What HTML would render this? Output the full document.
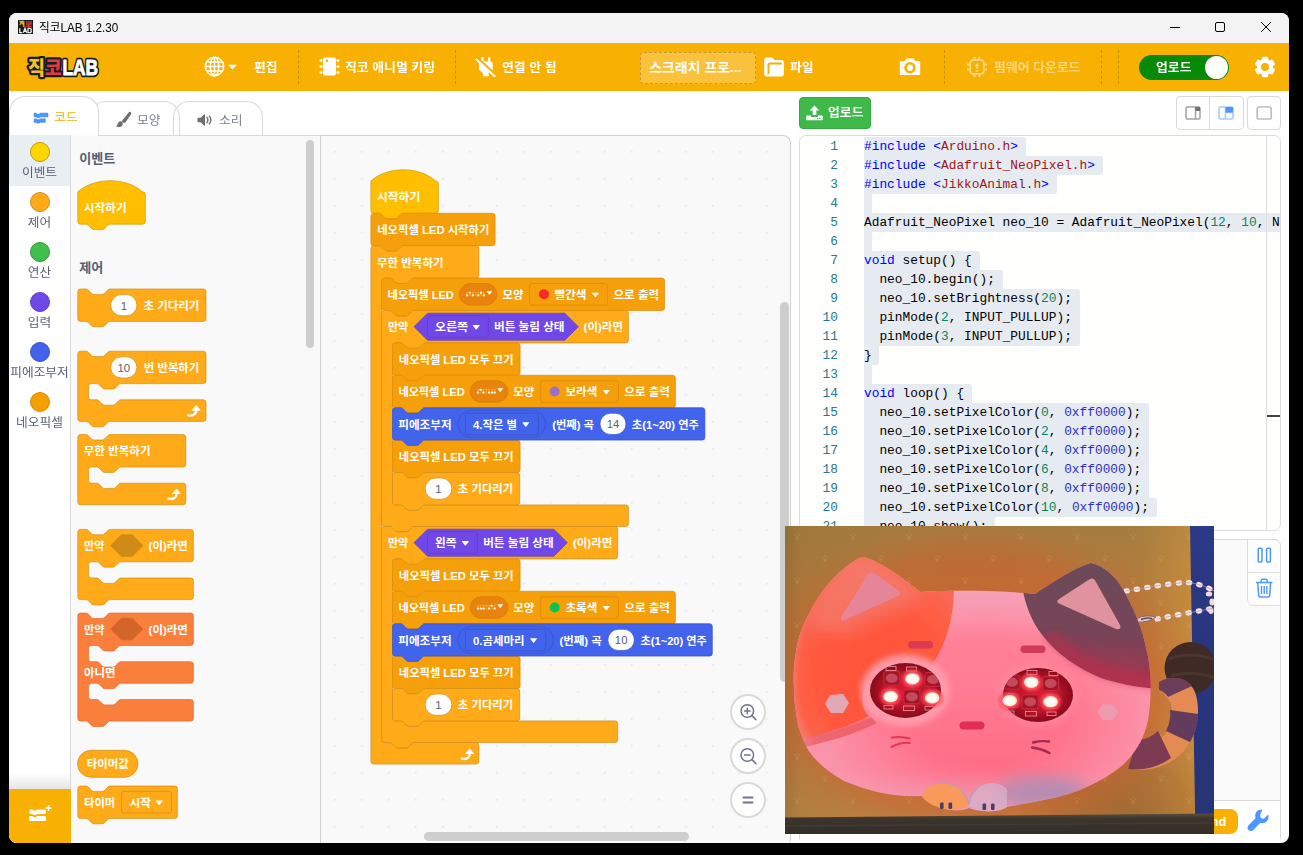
<!DOCTYPE html>
<html lang="ko">
<head>
<meta charset="utf-8">
<title>직코LAB 1.2.30</title>
<style>
*{box-sizing:border-box;margin:0;padding:0}
html,body{width:1303px;height:855px;overflow:hidden;background:#000}
body{font-family:"Liberation Sans","Noto Sans CJK KR",sans-serif;position:relative;color:#575e75}
.abs{position:absolute}
#win{position:absolute;left:9px;top:13px;width:1280px;height:830px;background:#fff;border-radius:8px;overflow:hidden}
/* all children of #win are positioned in SCREEN coords via this shifted layer */
#L{position:absolute;left:-9px;top:-13px;width:1303px;height:855px}
#titlebar{left:9px;top:13px;width:1280px;height:30px;background:#f3f3f3}
#title{left:38.500px;top:20px;font-size:12px;line-height:16px;color:#000;white-space:nowrap;transform:scaleX(.972);transform-origin:0 50%}
#menubar{left:9px;top:43px;width:1280px;height:48px;background:#f8b003}
.mtxt{position:absolute;top:59px;height:18px;line-height:18px;font-size:12px;font-weight:bold;color:#fff;white-space:nowrap;transform:scaleX(1.072);transform-origin:0 50%}
.dash{position:absolute;top:50px;height:34px;width:0;border-left:1px dashed rgba(0,0,0,.18)}
#proj{left:640px;top:52px;width:116px;height:32px;border:1px dashed rgba(0,0,0,.2);border-radius:4px;background:#fac23c}
#toggle{left:1139px;top:55px;width:90px;height:25px;border-radius:13px;background:#078a07}
#knob{left:1205px;top:56px;width:23px;height:23px;border-radius:50%;background:#fff}
.tab{position:absolute;border:1px solid #d9d9d9;border-bottom:none;border-radius:16px 16px 0 0;background:#fbfcfd}
.ttxt{position:absolute;font-size:12px;line-height:16px;white-space:nowrap;color:#7a8094;transform:scaleX(1.07);transform-origin:0 50%}
#catcol{left:9px;top:135px;width:62px;height:708px;background:#fff;border-top:1px solid #d9d9d9;border-right:1px solid #d9d9d9}
.cat{position:absolute;left:30px;width:20px;height:20px;border-radius:50%;border:1px solid}
.clab{position:absolute;left:9px;width:61px;text-align:center;font-size:12px;line-height:14px;color:#575e75;white-space:nowrap;transform:scaleX(1.06)}
#flyout{left:71px;top:135px;width:250px;height:708px;background:#f9f9f9;border-top:1px solid #d9d9d9;border-right:1px solid #d0d0d0}
#ws{left:321px;top:135px;width:470px;height:712px;background:#f9f9f9;border:1px solid #d0d0d0;border-left:none;border-radius:0 8px 8px 0;
 background-image:radial-gradient(circle,#dedede 0.6px,rgba(222,222,222,0) 1.15px);background-size:27px 27px;background-position:0.3px 2.3px}
.sb{position:absolute;background:#cecece;border-radius:5px}
.zb{position:absolute;left:730px;width:36px;height:36px;border-radius:50%;background:#fff;border:2px solid #d9d9d9}
#upbtn{left:799px;top:97px;width:72px;height:32px;border-radius:4px;background:#3fb94a;border:1px solid #38a843}
.lbtn{position:absolute;top:96px;height:34px;border:1px solid #d9d9d9;background:#fff}
#editor{left:799px;top:135px;width:482px;height:396px;border:1px solid #dcdcdc;border-radius:7px;background:#fffffe;overflow:hidden}
#edin{position:absolute;left:-800px;top:-136px;width:1303px;height:855px}
.ln{position:absolute;left:800px;width:38px;text-align:right;height:19px;line-height:19px;font-family:"Liberation Mono","DejaVu Sans Mono",monospace;font-size:12.83px;color:#237893;white-space:pre}
.cl{position:absolute;left:864px;height:19px;line-height:19px;font-family:"Liberation Mono","DejaVu Sans Mono",monospace;font-size:12.83px;color:#000;white-space:pre}
.sel{position:absolute;left:864px;height:19px;background:#e5ebf1}
.k{color:#0000ff}.s{color:#a31515}.n{color:#098658}.h{color:#3030c0}
#term{left:799px;top:539px;width:482px;height:305px;border:1px solid #dcdcdc;border-radius:7px;background:#fafafa;overflow:hidden}
#termbot{left:800px;top:800px;width:480px;height:43px;background:#fff;border-top:1px solid #d9d9d9}
#tools{left:1247px;top:539px;width:34px;height:67px;background:#fff;border:1px solid #dcdcdc;border-radius:0 7px 0 7px}
#send{left:1186px;top:809px;width:52px;padding-right:3px;height:25px;border-radius:8px;background:#f8b003;color:#fff;font-weight:bold;font-size:13px;line-height:25px;text-align:center}
#ext{left:9px;top:789px;width:62px;height:54px;background:#f8b003}
#extfade{left:9px;top:773px;width:61px;height:16px;background:linear-gradient(rgba(255,255,255,0),rgba(0,0,0,.10))}
svg{position:absolute;overflow:visible}
svg text{font-family:"Liberation Sans","Noto Sans CJK KR",sans-serif}
</style>
</head>
<body>
<div id="win"><div id="L">
<!-- ===== title bar ===== -->
<div class="abs" id="titlebar"></div>
<svg style="left:17.500px;top:20px" width="15" height="14" viewBox="0 0 15 14">
 <rect width="15" height="14" fill="#1a1a1a"/>
 <path d="M1.500 1.500h4.500M3.700 1.500L1.800 5M3.700 2.500l2 2.300M5.800 1v6" stroke="#e8b424" stroke-width="1.300" fill="none"/>
 <path d="M8 1.800h5v2.200h-5M8 4h5M10.500 4v2M7.500 6.300h6.200" stroke="#dc3a30" stroke-width="1.300" fill="none"/>
 <path d="M1.800 8.200v4.300h2.400M5.300 12.800l1.700-4.600 1.700 4.600M6 11.300h2M10 8.300v4.300h2.300c1.500 0 1.500-2.100 0-2.100c1.300 0 1.300-2.200 0-2.200z" stroke="#f2f2f2" stroke-width="1.250" fill="none"/>
</svg>
<div class="abs" id="title">직코LAB 1.2.30</div>
<svg style="left:1165px;top:17px" width="115" height="22" viewBox="1165 17 115 22" fill="none" stroke="#000" stroke-width="1">
 <path d="M1170 27.5h10"/>
 <rect x="1215.5" y="22.5" width="9" height="9" rx="1.5"/>
 <path d="M1261.2 22.2l9.6 9.6M1270.8 22.2l-9.6 9.6"/>
</svg>

<!-- ===== menu bar ===== -->
<div class="abs" id="menubar"></div>
<svg style="left:24px;top:52px" width="80" height="30" viewBox="24 52 80 30">
 <g font-family="'Liberation Sans','Noto Sans CJK KR',sans-serif" font-weight="900" font-size="19" stroke-linejoin="round">
  <g stroke="#171b2b" stroke-width="4.500" fill="#171b2b">
   <text x="28" y="74.500" textLength="17" lengthAdjust="spacingAndGlyphs">직</text>
   <text x="45" y="74.500" textLength="16.500" lengthAdjust="spacingAndGlyphs">코</text>
   <text x="62.500" y="75" textLength="35.500" lengthAdjust="spacingAndGlyphs" font-size="21.500" font-weight="bold">LAB</text>
  </g>
  <text x="28" y="74.500" textLength="17" lengthAdjust="spacingAndGlyphs" fill="#f8c21c">직</text>
  <text x="45" y="74.500" textLength="16.500" lengthAdjust="spacingAndGlyphs" fill="#e23b3b">코</text>
  <text x="62.500" y="75" textLength="35.500" lengthAdjust="spacingAndGlyphs" fill="#fff" stroke="#fff" stroke-width=".9" font-size="21.500" font-weight="bold">LAB</text>
 </g>
</svg>
<!-- globe -->
<svg style="left:204px;top:56px" width="21" height="21" viewBox="0 0 21 21" fill="none" stroke="#fff" stroke-width="1.5">
 <circle cx="10.5" cy="10.5" r="9.2"/><ellipse cx="10.5" cy="10.5" rx="4.3" ry="9.2"/><path d="M10.5 1.3v18.4M1.3 10.5h18.4M2.6 6h15.8M2.6 15h15.8"/>
</svg>
<svg style="left:228px;top:64px" width="9" height="6" viewBox="0 0 9 6"><path d="M0.8 0.8h7.4q.6 0 .2 .5l-3.4 3.7q-.5 .5-1 0l-3.4-3.7q-.4-.5 .2-.5z" fill="#fff"/></svg>
<div class="mtxt" style="left:254px">편집</div>
<div class="dash" style="left:298px"></div>
<!-- chip icon -->
<svg style="left:319px;top:57px" width="21" height="19" viewBox="0 0 21 19" fill="#fff">
 <rect x="4" y="0.5" width="13" height="18" rx="2"/>
 <rect x="0.5" y="2.2" width="3" height="2.6" rx="1"/><rect x="0.5" y="8.2" width="3" height="2.6" rx="1"/><rect x="0.5" y="14.2" width="3" height="2.6" rx="1"/>
 <rect x="17.5" y="2.2" width="3" height="2.6" rx="1"/><rect x="17.5" y="8.2" width="3" height="2.6" rx="1"/><rect x="17.5" y="14.2" width="3" height="2.6" rx="1"/>
 <circle cx="8" cy="3.8" r="1.2" fill="#f8b003"/>
</svg>
<div class="mtxt" style="left:345px">직코 애니멀 키링</div>
<div class="dash" style="left:455px"></div>
<!-- unplug icon -->
<svg style="left:472.400px;top:53.600px" width="28" height="26" viewBox="0 0 28 26"><g transform="scale(1.150 1.063)" fill="#fff">
 <path d="M18 14.490V9c0-1-1.010-2.010-2-2V3h-2v4h-4V3H8v2.480l9.510 9.500.49-.490zm-1.760 1.770L7.200 7.200l-.010.010L3.980 4 2.710 5.250l3.360 3.360C6.040 8.740 6 8.870 6 9v5.480L9.500 18v3h5v-3l.480-.480L19.450 22l1.260-1.280-4.470-4.460z"/>
</g></svg>
<div class="mtxt" style="left:502px">연결 안 됨</div>
<div class="abs" id="proj"></div>
<div class="mtxt" style="left:649px;font-size:13px">스크래치 프로...</div>
<!-- folder -->
<svg style="left:764px;top:57px" width="21" height="21" viewBox="0 0 21 21">
 <path d="M0.200 3.200c0-1.700.9-2.700 2.600-2.700h4.400c.9 0 1.500.3 2 1l1 1.400h7c1.700 0 2.700 1 2.700 2.700v11.200c0 1.700-1 2.700-2.700 2.700H2.800c-1.700 0-2.600-1-2.600-2.700z" fill="#fff"/>
 <path d="M4.500 16.800V8c0-1 .5-1.500 1.500-1.500h11.800" fill="none" stroke="#f8b003" stroke-width="2"/>
</svg>
<div class="mtxt" style="left:790px">파일</div>
<!-- camera -->
<svg style="left:899px;top:58px" width="22" height="18" viewBox="0 0 22 18" fill="#fff">
 <path d="M7.200 0.500h7.600l1.400 2.600h3.700c.8 0 1.300.5 1.300 1.300v11.300c0 .8-.5 1.300-1.300 1.300H2.100c-.8 0-1.300-.5-1.300-1.300V4.400c0-.8.5-1.300 1.300-1.300h3.700z"/>
 <circle cx="11" cy="9.700" r="5.700" fill="#f8b003"/><circle cx="11" cy="9.700" r="3.100"/>
</svg>
<div class="dash" style="left:944px"></div>
<!-- firmware icon (faded) -->
<svg style="left:966px;top:56px;opacity:.5" width="22" height="22" viewBox="0 0 22 22" fill="none" stroke="#fff" stroke-width="1.700">
 <rect x="4.200" y="4.200" width="13.600" height="13.600" rx="2.800"/>
 <path d="M8.600 1v3.200M13.400 1v3.200M8.600 17.800V21M13.400 17.800V21M1 8.600h3.200M1 13.400h3.200M17.800 8.600H21M17.800 13.400H21" stroke-width="2"/>
 <path d="M11 13V8.800M9.300 10.200L11 8.200l1.700 2M9.800 15h2.400" stroke-width="1.400"/>
</svg>
<div class="mtxt" style="left:994px;opacity:.5">펌웨어 다운로드</div>
<div class="dash" style="left:1101px"></div>
<div class="dash" style="left:1118px"></div>
<div class="abs" id="toggle"></div><div class="abs" id="knob"></div>
<div class="mtxt" style="left:1156px">업로드</div>
<!-- gear -->
<svg style="left:1254px;top:56px" width="22" height="22" viewBox="-11 -11 22 22">
 <g fill="#fff">
  <circle r="8.100"/>
  <g id="gt"><rect x="-3.200" y="-10.300" width="6.400" height="5" rx="1.400"/></g>
  <use href="#gt" transform="rotate(60)"/><use href="#gt" transform="rotate(120)"/><use href="#gt" transform="rotate(180)"/><use href="#gt" transform="rotate(240)"/><use href="#gt" transform="rotate(300)"/>
 </g>
 <circle r="3.900" fill="#f8b003"/>
</svg>

<!-- ===== tabs ===== -->
<div class="tab" style="left:173px;top:101px;width:90px;height:34px;background:transparent"></div>
<div class="tab" style="left:90px;top:101px;width:90px;height:34px;background:transparent"></div>
<div class="tab" style="left:9px;top:96px;width:90px;height:40px;background:#fff"></div>
<svg style="left:33px;top:112px" width="16" height="12" viewBox="0 0 18 14" fill="#4c97ff">
 <path d="M1.500 1h2l1 1h2.500l1-1h8.500a1 1 0 0 1 1 1v3a1 1 0 0 1-1 1h-8.500l-1 1h-2.500l-1-1h-2a1 1 0 0 1-1-1v-3a1 1 0 0 1 1-1z"/>
 <path d="M1.500 7.500h2l1 1h2.500l1-1h5.500a1 1 0 0 1 1 1v3a1 1 0 0 1-1 1h-5.500l-1 1h-2.500l-1-1h-2a1 1 0 0 1-1-1v-3a1 1 0 0 1 1-1z"/>
</svg>
<div class="ttxt" style="left:54px;top:109.500px;color:#f8b003">코드</div>
<svg style="left:114.500px;top:110.500px" width="17" height="17" viewBox="0 0 18 18" fill="#6f6f6f">
 <path d="M16.600 1c1 .7.700 1.800.2 2.600l-5.600 8.200c-.7 1-1.900 1.100-2.800.5s-1.200-1.700-.4-2.700l6.300-7.800c.6-.8 1.500-1.300 2.300-.8z"/>
 <path d="M7 11.200c1.400 1 1.700 2.800.7 4.200-1.400 2-4.700 2.100-7 .8 1.600-.6 2-1.600 2.300-2.900.4-1.800 2.400-3.200 4-2.100z"/>
</svg>
<div class="ttxt" style="left:137px;top:112.500px">모양</div>
<svg style="left:197px;top:112.500px" width="16" height="14" viewBox="0 0 18 16" fill="#6f6f6f">
 <path d="M1 5.300h3l4.200-3.800c.4-.3.800-.1.800.4v12.200c0 .5-.4.700-.8.400L4 10.700H1c-.3 0-.5-.2-.5-.5V5.800c0-.3.200-.5.500-.5z"/>
 <path d="M11.300 5c1.200 1.700 1.200 4.300 0 6" fill="none" stroke="#6f6f6f" stroke-width="1.600" stroke-linecap="round"/>
 <path d="M14 3.600c2 2.600 2 6.200 0 8.800" fill="none" stroke="#6f6f6f" stroke-width="1.600" stroke-linecap="round"/>
</svg>
<div class="ttxt" style="left:219px;top:112.500px">소리</div>

<!-- ===== category column ===== -->
<div class="abs" id="catcol"></div>
<div class="abs" style="left:9px;top:135px;width:61px;height:51px;background:#e9eef2"></div>
<div class="cat" style="top:142px;background:#ffd500;border-color:#cc9900"></div><div class="clab" style="top:165.500px">이벤트</div>
<div class="cat" style="top:192px;background:#ffab19;border-color:#cf8b17"></div><div class="clab" style="top:215.500px">제어</div>
<div class="cat" style="top:242px;background:#40bf4a;border-color:#389438"></div><div class="clab" style="top:265.500px">연산</div>
<div class="cat" style="top:292px;background:#7048e8;border-color:#5f3dc4"></div><div class="clab" style="top:315.500px">입력</div>
<div class="cat" style="top:342px;background:#4263eb;border-color:#364fc7"></div><div class="clab" style="top:365.500px">피에조부저</div>
<div class="cat" style="top:392px;background:#f59f00;border-color:#e08700"></div><div class="clab" style="top:415.500px">네오픽셀</div>
<div class="abs" id="extfade"></div>
<div class="abs" id="ext"></div>
<svg style="left:29px;top:805px" width="23" height="18" viewBox="0 0 23 18" fill="#fff">
 <path d="M1.500 4.500h2l1 1h2.500l1-1h8a1 1 0 0 1 1 1v2.500a1 1 0 0 1-1 1h-8l-1 1h-2.500l-1-1h-2a1 1 0 0 1-1-1v-2.500a1 1 0 0 1 1-1z"/>
 <path d="M1.500 11h2l1 1h2.500l1-1h8a1 1 0 0 1 1 1v3a1 1 0 0 1-1 1h-15a1 1 0 0 1-1-1v-3a1 1 0 0 1 1-1z"/>
 <path d="M19.500 0v6M16.500 3h6" stroke="#fff" stroke-width="1.600" fill="none"/>
</svg>
<!-- ===== flyout + workspace ===== -->
<div class="abs" id="flyout"></div>
<div class="abs" style="left:71px;top:135px;width:27px;height:1px;background:#fcfcfc"></div>
<div class="sb" style="left:306px;top:140px;width:8px;height:208px"></div>
<div class="abs" id="ws"></div>
<div class="sb" style="left:780px;top:302px;width:9px;height:380px"></div>
<div class="sb" style="left:424px;top:832px;width:265px;height:9px"></div>
<div class="zb" style="top:694px"></div><div class="zb" style="top:738px"></div><div class="zb" style="top:782px"></div>
<svg style="left:730px;top:694px" width="36" height="124" viewBox="730 694 36 124" fill="none" stroke="#6e7390" stroke-width="1.500" stroke-linecap="round">
 <circle cx="747.300" cy="711" r="6.300"/><path d="M751.900 715.600l4 4M744.500 711h5.600M747.300 708.200v5.600"/>
 <circle cx="747.300" cy="755" r="6.300"/><path d="M751.900 759.600l4 4M744.500 755h5.600"/>
 <path d="M743.500 797.500h9M743.500 802.500h9" stroke-width="1.800"/>
</svg>
<svg style="left:0;top:0" width="321" height="843" viewBox="0 0 321 843">
<text x="79.3" y="163.48" textLength="36.1" lengthAdjust="spacingAndGlyphs" font-size="13" font-weight="bold" fill="#575e75">이벤트</text>
<text x="79.3" y="272.48" textLength="24" lengthAdjust="spacingAndGlyphs" font-size="13" font-weight="bold" fill="#575e75">제어</text>
<path transform="translate(77.8,191.8) scale(0.675)" d="m 0,0 c 25,-22 71,-22 96,0 H 96 a 4,4 0 0,1 4,4 v 40 a 4,4 0 0,1 -4,4 H 48 c -2,0 -3,1 -4,2 l -4,4 c -1,1 -2,2 -4,2 h -12 c -2,0 -3,-1 -4,-2 l -4,-4 c -1,-1 -2,-2 -4,-2 H 4 a 4,4 0 0,1 -4,-4 z" fill="#ffbf00" stroke="#cc9900" stroke-width="1"/>
<text x="83.8" y="211.69" textLength="42.8" lengthAdjust="spacingAndGlyphs" font-size="10.8" font-weight="bold" fill="#fff">시작하기</text>
<path transform="translate(77.8,289) scale(0.675)" d="m 0,4 A 4,4 0 0,1 4,0 H 12 c 2,0 3,1 4,2 l 4,4 c 1,1 2,2 4,2 h 12 c 2,0 3,-1 4,-2 l 4,-4 c 1,-1 2,-2 4,-2 H 185.93 a 4,4 0 0,1 4,4 v 40 a 4,4 0 0,1 -4,4 H 48 c -2,0 -3,1 -4,2 l -4,4 c -1,1 -2,2 -4,2 h -12 c -2,0 -3,-1 -4,-2 l -4,-4 c -1,-1 -2,-2 -4,-2 H 4 a 4,4 0 0,1 -4,-4 z" fill="#ffab19" stroke="#cf8b17" stroke-width="1"/>
<rect x="110.7" y="294.6" width="26.2" height="21.2" rx="10.6" fill="#fff" stroke="#cf8b17" stroke-width="0.7"/>
<text x="123.8" y="309.77" text-anchor="middle" font-size="11.3" font-weight="normal" fill="#575e75">1</text>
<text x="143.5" y="309.89" textLength="55.8" lengthAdjust="spacingAndGlyphs" font-size="10.8" font-weight="bold" fill="#fff">초 기다리기</text>
<path transform="translate(77.8,351.2) scale(0.675)" d="m 0,4 A 4,4 0 0,1 4,0 H 12 c 2,0 3,1 4,2 l 4,4 c 1,1 2,2 4,2 h 12 c 2,0 3,-1 4,-2 l 4,-4 c 1,-1 2,-2 4,-2 H 185.93 a 4,4 0 0,1 4,4 v 40 a 4,4 0 0,1 -4,4 H 64 c -2,0 -3,1 -4,2 l -4,4 c -1,1 -2,2 -4,2 h -12 c -2,0 -3,-1 -4,-2 l -4,-4 c -1,-1 -2,-2 -4,-2 h -8 a 4,4 0 0,0 -4,4 v 16 a 4,4 0 0,0 4,4 h 8 c 2,0 3,1 4,2 l 4,4 c 1,1 2,2 4,2 h 12 c 2,0 3,-1 4,-2 l 4,-4 c 1,-1 2,-2 4,-2 H 185.93 a 4,4 0 0,1 4,4 v 24 a 4,4 0 0,1 -4,4 H 48 c -2,0 -3,1 -4,2 l -4,4 c -1,1 -2,2 -4,2 h -12 c -2,0 -3,-1 -4,-2 l -4,-4 c -1,-1 -2,-2 -4,-2 H 4 a 4,4 0 0,1 -4,-4 z" fill="#ffab19" stroke="#cf8b17" stroke-width="1"/>
<rect x="110.7" y="356.8" width="26.2" height="21.2" rx="10.6" fill="#fff" stroke="#cf8b17" stroke-width="0.7"/>
<text x="123.8" y="371.97" text-anchor="middle" font-size="11.3" font-weight="normal" fill="#575e75">10</text>
<text x="143.8" y="372.09" textLength="55.5" lengthAdjust="spacingAndGlyphs" font-size="10.8" font-weight="bold" fill="#fff">번 반복하기</text>
<g transform="translate(186.7,404.5) scale(1.05)" fill="none" stroke="#fff" stroke-width="2.2" stroke-linecap="round" stroke-linejoin="round"><path d="M1.500 10.300c4.200 1 7.700-1 7.600-5.300"/><path d="M5.400 5.400L9.100 1.400l3.500 4z" fill="#fff" stroke-width="1"/></g>
<path transform="translate(77.8,434.6) scale(0.675)" d="m 0,4 A 4,4 0 0,1 4,0 H 12 c 2,0 3,1 4,2 l 4,4 c 1,1 2,2 4,2 h 12 c 2,0 3,-1 4,-2 l 4,-4 c 1,-1 2,-2 4,-2 H 156 a 4,4 0 0,1 4,4 v 40 a 4,4 0 0,1 -4,4 H 64 c -2,0 -3,1 -4,2 l -4,4 c -1,1 -2,2 -4,2 h -12 c -2,0 -3,-1 -4,-2 l -4,-4 c -1,-1 -2,-2 -4,-2 h -8 a 4,4 0 0,0 -4,4 v 16 a 4,4 0 0,0 4,4 h 8 c 2,0 3,1 4,2 l 4,4 c 1,1 2,2 4,2 h 12 c 2,0 3,-1 4,-2 l 4,-4 c 1,-1 2,-2 4,-2 H 156 a 4,4 0 0,1 4,4 v 24 a 4,4 0 0,1 -4,4 H 4 a 4,4 0 0,1 -4,-4 z" fill="#ffab19" stroke="#cf8b17" stroke-width="1"/>
<text x="83.7" y="455.49" textLength="66.9" lengthAdjust="spacingAndGlyphs" font-size="10.8" font-weight="bold" fill="#fff">무한 반복하기</text>
<g transform="translate(167,487.9) scale(1.05)" fill="none" stroke="#fff" stroke-width="2.2" stroke-linecap="round" stroke-linejoin="round"><path d="M1.500 10.300c4.200 1 7.700-1 7.600-5.300"/><path d="M5.400 5.400L9.100 1.400l3.500 4z" fill="#fff" stroke-width="1"/></g>
<path transform="translate(77.8,529.4) scale(0.675)" d="m 0,4 A 4,4 0 0,1 4,0 H 12 c 2,0 3,1 4,2 l 4,4 c 1,1 2,2 4,2 h 12 c 2,0 3,-1 4,-2 l 4,-4 c 1,-1 2,-2 4,-2 H 167.26 a 4,4 0 0,1 4,4 v 40 a 4,4 0 0,1 -4,4 H 64 c -2,0 -3,1 -4,2 l -4,4 c -1,1 -2,2 -4,2 h -12 c -2,0 -3,-1 -4,-2 l -4,-4 c -1,-1 -2,-2 -4,-2 h -8 a 4,4 0 0,0 -4,4 v 16 a 4,4 0 0,0 4,4 h 8 c 2,0 3,1 4,2 l 4,4 c 1,1 2,2 4,2 h 12 c 2,0 3,-1 4,-2 l 4,-4 c 1,-1 2,-2 4,-2 H 167.26 a 4,4 0 0,1 4,4 v 24 a 4,4 0 0,1 -4,4 H 48 c -2,0 -3,1 -4,2 l -4,4 c -1,1 -2,2 -4,2 h -12 c -2,0 -3,-1 -4,-2 l -4,-4 c -1,-1 -2,-2 -4,-2 H 4 a 4,4 0 0,1 -4,-4 z" fill="#ffab19" stroke="#cf8b17" stroke-width="1"/>
<text x="84" y="550.29" textLength="20.4" lengthAdjust="spacingAndGlyphs" font-size="10.8" font-weight="bold" fill="#fff">만약</text>
<path d="M121.4 534.8 H132.2 L143 545.6 L132.2 556.4 H121.4 L110.6 545.6 Z" fill="#cf8b17" stroke="#cf8b17" stroke-width="0.7"/>
<text x="148.6" y="550.29" textLength="39.1" lengthAdjust="spacingAndGlyphs" font-size="10.8" font-weight="bold" fill="#fff">(이)라면</text>
<path transform="translate(77.8,613.1) scale(0.675)" d="m 0,4 A 4,4 0 0,1 4,0 H 12 c 2,0 3,1 4,2 l 4,4 c 1,1 2,2 4,2 h 12 c 2,0 3,-1 4,-2 l 4,-4 c 1,-1 2,-2 4,-2 H 167.26 a 4,4 0 0,1 4,4 v 40 a 4,4 0 0,1 -4,4 H 64 c -2,0 -3,1 -4,2 l -4,4 c -1,1 -2,2 -4,2 h -12 c -2,0 -3,-1 -4,-2 l -4,-4 c -1,-1 -2,-2 -4,-2 h -8 a 4,4 0 0,0 -4,4 v 16 a 4,4 0 0,0 4,4 h 8 c 2,0 3,1 4,2 l 4,4 c 1,1 2,2 4,2 h 12 c 2,0 3,-1 4,-2 l 4,-4 c 1,-1 2,-2 4,-2 H 167.26 a 4,4 0 0,1 4,4 v 24 a 4,4 0 0,1 -4,4 H 64 c -2,0 -3,1 -4,2 l -4,4 c -1,1 -2,2 -4,2 h -12 c -2,0 -3,-1 -4,-2 l -4,-4 c -1,-1 -2,-2 -4,-2 h -8 a 4,4 0 0,0 -4,4 v 16 a 4,4 0 0,0 4,4 h 8 c 2,0 3,1 4,2 l 4,4 c 1,1 2,2 4,2 h 12 c 2,0 3,-1 4,-2 l 4,-4 c 1,-1 2,-2 4,-2 H 167.26 a 4,4 0 0,1 4,4 v 24 a 4,4 0 0,1 -4,4 H 48 c -2,0 -3,1 -4,2 l -4,4 c -1,1 -2,2 -4,2 h -12 c -2,0 -3,-1 -4,-2 l -4,-4 c -1,-1 -2,-2 -4,-2 H 4 a 4,4 0 0,1 -4,-4 z" fill="#fb7f3c" stroke="#e06a2a" stroke-width="1"/>
<text x="84" y="633.69" textLength="20.4" lengthAdjust="spacingAndGlyphs" font-size="10.8" font-weight="bold" fill="#fff">만약</text>
<path d="M121.4 618.2 H132.2 L143 629 L132.2 639.8 H121.4 L110.6 629 Z" fill="#d4652a" stroke="#d4652a" stroke-width="0.7"/>
<text x="148.6" y="633.69" textLength="39.1" lengthAdjust="spacingAndGlyphs" font-size="10.8" font-weight="bold" fill="#fff">(이)라면</text>
<text x="84" y="676.89" textLength="31.6" lengthAdjust="spacingAndGlyphs" font-size="10.8" font-weight="bold" fill="#fff">아니면</text>
<rect x="77.5" y="750.3" width="60.5" height="27" rx="13.5" fill="#ffab19" stroke="#cf8b17" stroke-width="0.7"/>
<text x="86.8" y="768.49" textLength="41.8" lengthAdjust="spacingAndGlyphs" font-size="10.8" font-weight="bold" fill="#fff">타이머값</text>
<path transform="translate(77.8,786) scale(0.675)" d="m 0,4 A 4,4 0 0,1 4,0 H 12 c 2,0 3,1 4,2 l 4,4 c 1,1 2,2 4,2 h 12 c 2,0 3,-1 4,-2 l 4,-4 c 1,-1 2,-2 4,-2 H 143.56 a 4,4 0 0,1 4,4 v 40 a 4,4 0 0,1 -4,4 H 48 c -2,0 -3,1 -4,2 l -4,4 c -1,1 -2,2 -4,2 h -12 c -2,0 -3,-1 -4,-2 l -4,-4 c -1,-1 -2,-2 -4,-2 H 4 a 4,4 0 0,1 -4,-4 z" fill="#ffab19" stroke="#cf8b17" stroke-width="1"/>
<text x="84" y="806.89" textLength="31.3" lengthAdjust="spacingAndGlyphs" font-size="10.8" font-weight="bold" fill="#fff">타이머</text>
<rect x="121.5" y="791.4" width="50" height="21.6" rx="2.7" fill="#ffab19" stroke="#cf8b17" stroke-width="0.7"/>
<text x="129.5" y="806.89" textLength="21.4" lengthAdjust="spacingAndGlyphs" font-size="10.8" font-weight="bold" fill="#fff">시작</text>
<path d="M156.1 800.61 h6.2 q.7 0 .25 .55 l-2.85 3.58 q-.5 .5 -1 0 l-2.85 -3.58 q-.45 -.55 .25 -.55z" fill="#fff"/>
</svg>
<svg style="left:0;top:0" width="791" height="843" viewBox="0 0 791 843">
<path transform="translate(370.9,180.9) scale(0.675)" d="m 0,0 c 25,-22 71,-22 96,0 H 96 a 4,4 0 0,1 4,4 v 40 a 4,4 0 0,1 -4,4 H 48 c -2,0 -3,1 -4,2 l -4,4 c -1,1 -2,2 -4,2 h -12 c -2,0 -3,-1 -4,-2 l -4,-4 c -1,-1 -2,-2 -4,-2 H 4 a 4,4 0 0,1 -4,-4 z" fill="#ffbf00" stroke="#cc9900" stroke-width="1"/>
<text x="377" y="200.99" textLength="43.2" lengthAdjust="spacingAndGlyphs" font-size="10.8" font-weight="bold" fill="#fff">시작하기</text>
<path transform="translate(370.9,213.3) scale(0.675)" d="m 0,4 A 4,4 0 0,1 4,0 H 12 c 2,0 3,1 4,2 l 4,4 c 1,1 2,2 4,2 h 12 c 2,0 3,-1 4,-2 l 4,-4 c 1,-1 2,-2 4,-2 H 180 a 4,4 0 0,1 4,4 v 40 a 4,4 0 0,1 -4,4 H 48 c -2,0 -3,1 -4,2 l -4,4 c -1,1 -2,2 -4,2 h -12 c -2,0 -3,-1 -4,-2 l -4,-4 c -1,-1 -2,-2 -4,-2 H 4 a 4,4 0 0,1 -4,-4 z" fill="#f59f0a" stroke="#dc8a06" stroke-width="1"/>
<text x="377.2" y="234.19" textLength="112.1" lengthAdjust="spacingAndGlyphs" font-size="10.8" font-weight="bold" fill="#fff">네오픽셀 LED 시작하기</text>
<path transform="translate(370.9,245.7) scale(0.675)" d="m 0,4 A 4,4 0 0,1 4,0 H 12 c 2,0 3,1 4,2 l 4,4 c 1,1 2,2 4,2 h 12 c 2,0 3,-1 4,-2 l 4,-4 c 1,-1 2,-2 4,-2 H 156 a 4,4 0 0,1 4,4 v 40 a 4,4 0 0,1 -4,4 H 64 c -2,0 -3,1 -4,2 l -4,4 c -1,1 -2,2 -4,2 h -12 c -2,0 -3,-1 -4,-2 l -4,-4 c -1,-1 -2,-2 -4,-2 h -8 a 4,4 0 0,0 -4,4 v 680 a 4,4 0 0,0 4,4 h 8 c 2,0 3,1 4,2 l 4,4 c 1,1 2,2 4,2 h 12 c 2,0 3,-1 4,-2 l 4,-4 c 1,-1 2,-2 4,-2 H 156 a 4,4 0 0,1 4,4 v 24 a 4,4 0 0,1 -4,4 H 4 a 4,4 0 0,1 -4,-4 z" fill="#ffab19" stroke="#cf8b17" stroke-width="1"/>
<text x="377" y="266.59" textLength="66.5" lengthAdjust="spacingAndGlyphs" font-size="10.8" font-weight="bold" fill="#fff">무한 반복하기</text>
<g transform="translate(460.2,747.9) scale(1.05)" fill="none" stroke="#fff" stroke-width="2.2" stroke-linecap="round" stroke-linejoin="round"><path d="M1.500 10.300c4.200 1 7.700-1 7.600-5.300"/><path d="M5.400 5.400L9.100 1.400l3.500 4z" fill="#fff" stroke-width="1"/></g>
<path transform="translate(381.7,310.5) scale(0.675)" d="m 0,4 A 4,4 0 0,1 4,0 H 12 c 2,0 3,1 4,2 l 4,4 c 1,1 2,2 4,2 h 12 c 2,0 3,-1 4,-2 l 4,-4 c 1,-1 2,-2 4,-2 H 361.48 a 4,4 0 0,1 4,4 v 40 a 4,4 0 0,1 -4,4 H 64 c -2,0 -3,1 -4,2 l -4,4 c -1,1 -2,2 -4,2 h -12 c -2,0 -3,-1 -4,-2 l -4,-4 c -1,-1 -2,-2 -4,-2 h -8 a 4,4 0 0,0 -4,4 v 232 a 4,4 0 0,0 4,4 h 8 c 2,0 3,1 4,2 l 4,4 c 1,1 2,2 4,2 h 12 c 2,0 3,-1 4,-2 l 4,-4 c 1,-1 2,-2 4,-2 H 361.48 a 4,4 0 0,1 4,4 v 24 a 4,4 0 0,1 -4,4 H 48 c -2,0 -3,1 -4,2 l -4,4 c -1,1 -2,2 -4,2 h -12 c -2,0 -3,-1 -4,-2 l -4,-4 c -1,-1 -2,-2 -4,-2 H 4 a 4,4 0 0,1 -4,-4 z" fill="#ffab19" stroke="#cf8b17" stroke-width="1"/>
<text x="387.9" y="331.39" textLength="20.2" lengthAdjust="spacingAndGlyphs" font-size="10.8" font-weight="bold" fill="#fff">만약</text>
<path d="M427.5 313.2 H564.8 L578.3 326.7 L564.8 340.2 H427.5 L414 326.7 Z" fill="#7048e8" stroke="#5f3dc4" stroke-width="0.7"/>
<rect x="427.5" y="315.9" width="60.9" height="21.6" rx="2.7" fill="#7048e8" stroke="#5f3dc4" stroke-width="0.7"/>
<text x="435" y="331.39" textLength="33.2" lengthAdjust="spacingAndGlyphs" font-size="10.8" font-weight="bold" fill="#fff">오른쪽</text>
<path d="M473.1 325.11 h6.2 q.7 0 .25 .55 l-2.85 3.58 q-.5 .5 -1 0 l-2.85 -3.58 q-.45 -.55 .25 -.55z" fill="#fff"/>
<text x="494" y="331.39" textLength="70.5" lengthAdjust="spacingAndGlyphs" font-size="10.8" font-weight="bold" fill="#fff">버튼 눌림 상태</text>
<text x="583.6" y="331.39" textLength="39.4" lengthAdjust="spacingAndGlyphs" font-size="10.8" font-weight="bold" fill="#fff">(이)라면</text>
<path transform="translate(381.7,526.5) scale(0.675)" d="m 0,4 A 4,4 0 0,1 4,0 H 12 c 2,0 3,1 4,2 l 4,4 c 1,1 2,2 4,2 h 12 c 2,0 3,-1 4,-2 l 4,-4 c 1,-1 2,-2 4,-2 H 345.63 a 4,4 0 0,1 4,4 v 40 a 4,4 0 0,1 -4,4 H 64 c -2,0 -3,1 -4,2 l -4,4 c -1,1 -2,2 -4,2 h -12 c -2,0 -3,-1 -4,-2 l -4,-4 c -1,-1 -2,-2 -4,-2 h -8 a 4,4 0 0,0 -4,4 v 232 a 4,4 0 0,0 4,4 h 8 c 2,0 3,1 4,2 l 4,4 c 1,1 2,2 4,2 h 12 c 2,0 3,-1 4,-2 l 4,-4 c 1,-1 2,-2 4,-2 H 345.63 a 4,4 0 0,1 4,4 v 24 a 4,4 0 0,1 -4,4 H 48 c -2,0 -3,1 -4,2 l -4,4 c -1,1 -2,2 -4,2 h -12 c -2,0 -3,-1 -4,-2 l -4,-4 c -1,-1 -2,-2 -4,-2 H 4 a 4,4 0 0,1 -4,-4 z" fill="#ffab19" stroke="#cf8b17" stroke-width="1"/>
<text x="387.9" y="547.39" textLength="20.2" lengthAdjust="spacingAndGlyphs" font-size="10.8" font-weight="bold" fill="#fff">만약</text>
<path d="M427.5 529.2 H553.9 L567.4 542.7 L553.9 556.2 H427.5 L414 542.7 Z" fill="#7048e8" stroke="#5f3dc4" stroke-width="0.7"/>
<rect x="427.5" y="531.9" width="49.9" height="21.6" rx="2.7" fill="#7048e8" stroke="#5f3dc4" stroke-width="0.7"/>
<text x="435" y="547.39" textLength="21.6" lengthAdjust="spacingAndGlyphs" font-size="10.8" font-weight="bold" fill="#fff">왼쪽</text>
<path d="M462.3 541.11 h6.2 q.7 0 .25 .55 l-2.85 3.58 q-.5 .5 -1 0 l-2.85 -3.58 q-.45 -.55 .25 -.55z" fill="#fff"/>
<text x="483.2" y="547.39" textLength="70.4" lengthAdjust="spacingAndGlyphs" font-size="10.8" font-weight="bold" fill="#fff">버튼 눌림 상태</text>
<text x="573" y="547.39" textLength="39.3" lengthAdjust="spacingAndGlyphs" font-size="10.8" font-weight="bold" fill="#fff">(이)라면</text>
<path transform="translate(381.7,278.1) scale(0.675)" d="m 0,4 A 4,4 0 0,1 4,0 H 12 c 2,0 3,1 4,2 l 4,4 c 1,1 2,2 4,2 h 12 c 2,0 3,-1 4,-2 l 4,-4 c 1,-1 2,-2 4,-2 H 415.11 a 4,4 0 0,1 4,4 v 40 a 4,4 0 0,1 -4,4 H 48 c -2,0 -3,1 -4,2 l -4,4 c -1,1 -2,2 -4,2 h -12 c -2,0 -3,-1 -4,-2 l -4,-4 c -1,-1 -2,-2 -4,-2 H 4 a 4,4 0 0,1 -4,-4 z" fill="#f59f0a" stroke="#dc8a06" stroke-width="1"/>
<text x="387.6" y="298.99" textLength="66.3" lengthAdjust="spacingAndGlyphs" font-size="10.8" font-weight="bold" fill="#fff">네오픽셀 LED</text>
<rect x="459.5" y="283.5" width="37.4" height="21.6" rx="10.8" fill="#e8830e" stroke="#d97706" stroke-width="0.7"/>
<rect x="466.15" y="291.65" width="2" height="2" rx=".4" fill="#f7a416"/>
<rect x="468.93" y="291.65" width="2" height="2" rx=".4" fill="#fff"/>
<rect x="471.71" y="291.65" width="2" height="2" rx=".4" fill="#f7a416"/>
<rect x="474.49" y="291.65" width="2" height="2" rx=".4" fill="#f7a416"/>
<rect x="477.27" y="291.65" width="2" height="2" rx=".4" fill="#f7a416"/>
<rect x="480.05" y="291.65" width="2" height="2" rx=".4" fill="#fff"/>
<rect x="482.83" y="291.65" width="2" height="2" rx=".4" fill="#f7a416"/>
<rect x="466.15" y="294.35" width="2" height="2" rx=".4" fill="#fff"/>
<rect x="468.93" y="294.35" width="2" height="2" rx=".4" fill="#f7a416"/>
<rect x="471.71" y="294.35" width="2" height="2" rx=".4" fill="#fff"/>
<rect x="474.49" y="294.35" width="2" height="2" rx=".4" fill="#f7a416"/>
<rect x="477.27" y="294.35" width="2" height="2" rx=".4" fill="#fff"/>
<rect x="480.05" y="294.35" width="2" height="2" rx=".4" fill="#f7a416"/>
<rect x="482.83" y="294.35" width="2" height="2" rx=".4" fill="#fff"/>
<path d="M487 291.02 h4.8 q.7 0 .25 .55 l-2.15 2.76 q-.5 .5 -1 0 l-2.15 -2.76 q-.45 -.55 .25 -.55z" fill="#fff"/>
<text x="502.5" y="298.99" textLength="20.9" lengthAdjust="spacingAndGlyphs" font-size="10.8" font-weight="bold" fill="#fff">모양</text>
<rect x="529.5" y="283.5" width="78.1" height="21.6" rx="2.7" fill="#f59f0a" stroke="#dc8a06" stroke-width="0.7"/>
<circle cx="543.9" cy="294.3" r="5" fill="#fa2a2a"/>
<text x="554.6" y="298.99" textLength="31.9" lengthAdjust="spacingAndGlyphs" font-size="10.8" font-weight="bold" fill="#fff">빨간색</text>
<path d="M592.4 292.71 h6.2 q.7 0 .25 .55 l-2.85 3.58 q-.5 .5 -1 0 l-2.85 -3.58 q-.45 -.55 .25 -.55z" fill="#fff"/>
<text x="613.5" y="298.99" textLength="45.7" lengthAdjust="spacingAndGlyphs" font-size="10.8" font-weight="bold" fill="#fff">으로 출력</text>
<path transform="translate(392.5,342.9) scale(0.675)" d="m 0,4 A 4,4 0 0,1 4,0 H 12 c 2,0 3,1 4,2 l 4,4 c 1,1 2,2 4,2 h 12 c 2,0 3,-1 4,-2 l 4,-4 c 1,-1 2,-2 4,-2 H 185.04 a 4,4 0 0,1 4,4 v 40 a 4,4 0 0,1 -4,4 H 48 c -2,0 -3,1 -4,2 l -4,4 c -1,1 -2,2 -4,2 h -12 c -2,0 -3,-1 -4,-2 l -4,-4 c -1,-1 -2,-2 -4,-2 H 4 a 4,4 0 0,1 -4,-4 z" fill="#f59f0a" stroke="#dc8a06" stroke-width="1"/>
<text x="398.8" y="363.79" textLength="114.8" lengthAdjust="spacingAndGlyphs" font-size="10.8" font-weight="bold" fill="#fff">네오픽셀 LED 모두 끄기</text>
<path transform="translate(392.5,375.3) scale(0.675)" d="m 0,4 A 4,4 0 0,1 4,0 H 12 c 2,0 3,1 4,2 l 4,4 c 1,1 2,2 4,2 h 12 c 2,0 3,-1 4,-2 l 4,-4 c 1,-1 2,-2 4,-2 H 415.11 a 4,4 0 0,1 4,4 v 40 a 4,4 0 0,1 -4,4 H 48 c -2,0 -3,1 -4,2 l -4,4 c -1,1 -2,2 -4,2 h -12 c -2,0 -3,-1 -4,-2 l -4,-4 c -1,-1 -2,-2 -4,-2 H 4 a 4,4 0 0,1 -4,-4 z" fill="#f59f0a" stroke="#dc8a06" stroke-width="1"/>
<text x="398.4" y="396.19" textLength="66.3" lengthAdjust="spacingAndGlyphs" font-size="10.8" font-weight="bold" fill="#fff">네오픽셀 LED</text>
<rect x="470.3" y="380.7" width="37.4" height="21.6" rx="10.8" fill="#e8830e" stroke="#d97706" stroke-width="0.7"/>
<rect x="476.95" y="388.85" width="2" height="2" rx=".4" fill="#f7a416"/>
<rect x="479.73" y="388.85" width="2" height="2" rx=".4" fill="#fff"/>
<rect x="482.51" y="388.85" width="2" height="2" rx=".4" fill="#f7a416"/>
<rect x="485.29" y="388.85" width="2" height="2" rx=".4" fill="#f7a416"/>
<rect x="488.07" y="388.85" width="2" height="2" rx=".4" fill="#f7a416"/>
<rect x="490.85" y="388.85" width="2" height="2" rx=".4" fill="#f7a416"/>
<rect x="493.63" y="388.85" width="2" height="2" rx=".4" fill="#f7a416"/>
<rect x="476.95" y="391.55" width="2" height="2" rx=".4" fill="#fff"/>
<rect x="479.73" y="391.55" width="2" height="2" rx=".4" fill="#f7a416"/>
<rect x="482.51" y="391.55" width="2" height="2" rx=".4" fill="#fff"/>
<rect x="485.29" y="391.55" width="2" height="2" rx=".4" fill="#f7a416"/>
<rect x="488.07" y="391.55" width="2" height="2" rx=".4" fill="#fff"/>
<rect x="490.85" y="391.55" width="2" height="2" rx=".4" fill="#fff"/>
<rect x="493.63" y="391.55" width="2" height="2" rx=".4" fill="#fff"/>
<path d="M497.8 388.22 h4.8 q.7 0 .25 .55 l-2.15 2.76 q-.5 .5 -1 0 l-2.15 -2.76 q-.45 -.55 .25 -.55z" fill="#fff"/>
<text x="513.3" y="396.19" textLength="20.9" lengthAdjust="spacingAndGlyphs" font-size="10.8" font-weight="bold" fill="#fff">모양</text>
<rect x="540.3" y="380.7" width="78.1" height="21.6" rx="2.7" fill="#f59f0a" stroke="#dc8a06" stroke-width="0.7"/>
<circle cx="554.7" cy="391.5" r="5" fill="#9a6fd0"/>
<text x="565.4" y="396.19" textLength="31.9" lengthAdjust="spacingAndGlyphs" font-size="10.8" font-weight="bold" fill="#fff">보라색</text>
<path d="M603.2 389.91 h6.2 q.7 0 .25 .55 l-2.85 3.58 q-.5 .5 -1 0 l-2.85 -3.58 q-.45 -.55 .25 -.55z" fill="#fff"/>
<text x="624.3" y="396.19" textLength="45.7" lengthAdjust="spacingAndGlyphs" font-size="10.8" font-weight="bold" fill="#fff">으로 출력</text>
<path transform="translate(392.5,440.1) scale(0.675)" d="m 0,4 A 4,4 0 0,1 4,0 H 12 c 2,0 3,1 4,2 l 4,4 c 1,1 2,2 4,2 h 12 c 2,0 3,-1 4,-2 l 4,-4 c 1,-1 2,-2 4,-2 H 185.04 a 4,4 0 0,1 4,4 v 40 a 4,4 0 0,1 -4,4 H 48 c -2,0 -3,1 -4,2 l -4,4 c -1,1 -2,2 -4,2 h -12 c -2,0 -3,-1 -4,-2 l -4,-4 c -1,-1 -2,-2 -4,-2 H 4 a 4,4 0 0,1 -4,-4 z" fill="#f59f0a" stroke="#dc8a06" stroke-width="1"/>
<text x="398.8" y="460.99" textLength="114.8" lengthAdjust="spacingAndGlyphs" font-size="10.8" font-weight="bold" fill="#fff">네오픽셀 LED 모두 끄기</text>
<path transform="translate(392.5,472.5) scale(0.675)" d="m 0,4 A 4,4 0 0,1 4,0 H 12 c 2,0 3,1 4,2 l 4,4 c 1,1 2,2 4,2 h 12 c 2,0 3,-1 4,-2 l 4,-4 c 1,-1 2,-2 4,-2 H 184.44 a 4,4 0 0,1 4,4 v 40 a 4,4 0 0,1 -4,4 H 48 c -2,0 -3,1 -4,2 l -4,4 c -1,1 -2,2 -4,2 h -12 c -2,0 -3,-1 -4,-2 l -4,-4 c -1,-1 -2,-2 -4,-2 H 4 a 4,4 0 0,1 -4,-4 z" fill="#ffab19" stroke="#cf8b17" stroke-width="1"/>
<rect x="425.1" y="478.1" width="26.7" height="21.2" rx="10.6" fill="#fff" stroke="#cf8b17" stroke-width="0.7"/>
<text x="438.45" y="493.27" text-anchor="middle" font-size="11.3" font-weight="normal" fill="#575e75">1</text>
<text x="457.8" y="493.39" textLength="55.5" lengthAdjust="spacingAndGlyphs" font-size="10.8" font-weight="bold" fill="#fff">초 기다리기</text>
<path transform="translate(392.5,407.7) scale(0.675)" d="m 0,4 A 4,4 0 0,1 4,0 H 12 c 2,0 3,1 4,2 l 4,4 c 1,1 2,2 4,2 h 12 c 2,0 3,-1 4,-2 l 4,-4 c 1,-1 2,-2 4,-2 H 458.81 a 4,4 0 0,1 4,4 v 40 a 4,4 0 0,1 -4,4 H 48 c -2,0 -3,1 -4,2 l -4,4 c -1,1 -2,2 -4,2 h -12 c -2,0 -3,-1 -4,-2 l -4,-4 c -1,-1 -2,-2 -4,-2 H 4 a 4,4 0 0,1 -4,-4 z" fill="#4263eb" stroke="#3652c8" stroke-width="1"/>
<text x="398.3" y="428.59" textLength="53.3" lengthAdjust="spacingAndGlyphs" font-size="10.8" font-weight="bold" fill="#fff">피에조부저</text>
<rect x="457.8" y="410.4" width="87.9" height="27" rx="13.5" fill="#4263eb" stroke="#3652c8" stroke-width="0.7"/>
<rect x="465.3" y="413.1" width="73.1" height="21.6" rx="2.7" fill="#4263eb" stroke="#3652c8" stroke-width="0.7"/>
<text x="473" y="428.59" textLength="44" lengthAdjust="spacingAndGlyphs" font-size="10.8" font-weight="bold" fill="#fff">4.작은 별</text>
<path d="M522.7 422.31 h6.2 q.7 0 .25 .55 l-2.85 3.58 q-.5 .5 -1 0 l-2.85 -3.58 q-.45 -.55 .25 -.55z" fill="#fff"/>
<text x="552.2" y="428.59" textLength="41.8" lengthAdjust="spacingAndGlyphs" font-size="10.8" font-weight="bold" fill="#fff">(번째) 곡</text>
<rect x="600" y="413.3" width="26" height="21.2" rx="10.6" fill="#fff" stroke="#3652c8" stroke-width="0.7"/>
<text x="613" y="428.47" text-anchor="middle" font-size="11.3" font-weight="normal" fill="#575e75">14</text>
<text x="631.8" y="428.59" textLength="67.1" lengthAdjust="spacingAndGlyphs" font-size="10.8" font-weight="bold" fill="#fff">초(1~20) 연주</text>
<path transform="translate(392.5,558.9) scale(0.675)" d="m 0,4 A 4,4 0 0,1 4,0 H 12 c 2,0 3,1 4,2 l 4,4 c 1,1 2,2 4,2 h 12 c 2,0 3,-1 4,-2 l 4,-4 c 1,-1 2,-2 4,-2 H 185.04 a 4,4 0 0,1 4,4 v 40 a 4,4 0 0,1 -4,4 H 48 c -2,0 -3,1 -4,2 l -4,4 c -1,1 -2,2 -4,2 h -12 c -2,0 -3,-1 -4,-2 l -4,-4 c -1,-1 -2,-2 -4,-2 H 4 a 4,4 0 0,1 -4,-4 z" fill="#f59f0a" stroke="#dc8a06" stroke-width="1"/>
<text x="398.8" y="579.79" textLength="114.8" lengthAdjust="spacingAndGlyphs" font-size="10.8" font-weight="bold" fill="#fff">네오픽셀 LED 모두 끄기</text>
<path transform="translate(392.5,591.3) scale(0.675)" d="m 0,4 A 4,4 0 0,1 4,0 H 12 c 2,0 3,1 4,2 l 4,4 c 1,1 2,2 4,2 h 12 c 2,0 3,-1 4,-2 l 4,-4 c 1,-1 2,-2 4,-2 H 415.11 a 4,4 0 0,1 4,4 v 40 a 4,4 0 0,1 -4,4 H 48 c -2,0 -3,1 -4,2 l -4,4 c -1,1 -2,2 -4,2 h -12 c -2,0 -3,-1 -4,-2 l -4,-4 c -1,-1 -2,-2 -4,-2 H 4 a 4,4 0 0,1 -4,-4 z" fill="#f59f0a" stroke="#dc8a06" stroke-width="1"/>
<text x="398.4" y="612.19" textLength="66.3" lengthAdjust="spacingAndGlyphs" font-size="10.8" font-weight="bold" fill="#fff">네오픽셀 LED</text>
<rect x="470.3" y="596.7" width="37.4" height="21.6" rx="10.8" fill="#e8830e" stroke="#d97706" stroke-width="0.7"/>
<rect x="476.95" y="604.85" width="2" height="2" rx=".4" fill="#f7a416"/>
<rect x="479.73" y="604.85" width="2" height="2" rx=".4" fill="#f7a416"/>
<rect x="482.51" y="604.85" width="2" height="2" rx=".4" fill="#f7a416"/>
<rect x="485.29" y="604.85" width="2" height="2" rx=".4" fill="#f7a416"/>
<rect x="488.07" y="604.85" width="2" height="2" rx=".4" fill="#f7a416"/>
<rect x="490.85" y="604.85" width="2" height="2" rx=".4" fill="#fff"/>
<rect x="493.63" y="604.85" width="2" height="2" rx=".4" fill="#f7a416"/>
<rect x="476.95" y="607.55" width="2" height="2" rx=".4" fill="#fff"/>
<rect x="479.73" y="607.55" width="2" height="2" rx=".4" fill="#fff"/>
<rect x="482.51" y="607.55" width="2" height="2" rx=".4" fill="#fff"/>
<rect x="485.29" y="607.55" width="2" height="2" rx=".4" fill="#f7a416"/>
<rect x="488.07" y="607.55" width="2" height="2" rx=".4" fill="#fff"/>
<rect x="490.85" y="607.55" width="2" height="2" rx=".4" fill="#f7a416"/>
<rect x="493.63" y="607.55" width="2" height="2" rx=".4" fill="#fff"/>
<path d="M497.8 604.22 h4.8 q.7 0 .25 .55 l-2.15 2.76 q-.5 .5 -1 0 l-2.15 -2.76 q-.45 -.55 .25 -.55z" fill="#fff"/>
<text x="513.3" y="612.19" textLength="20.9" lengthAdjust="spacingAndGlyphs" font-size="10.8" font-weight="bold" fill="#fff">모양</text>
<rect x="540.3" y="596.7" width="78.1" height="21.6" rx="2.7" fill="#f59f0a" stroke="#dc8a06" stroke-width="0.7"/>
<circle cx="554.7" cy="607.5" r="5" fill="#00c853"/>
<text x="565.4" y="612.19" textLength="31.9" lengthAdjust="spacingAndGlyphs" font-size="10.8" font-weight="bold" fill="#fff">초록색</text>
<path d="M603.2 605.91 h6.2 q.7 0 .25 .55 l-2.85 3.58 q-.5 .5 -1 0 l-2.85 -3.58 q-.45 -.55 .25 -.55z" fill="#fff"/>
<text x="624.3" y="612.19" textLength="45.7" lengthAdjust="spacingAndGlyphs" font-size="10.8" font-weight="bold" fill="#fff">으로 출력</text>
<path transform="translate(392.5,656.1) scale(0.675)" d="m 0,4 A 4,4 0 0,1 4,0 H 12 c 2,0 3,1 4,2 l 4,4 c 1,1 2,2 4,2 h 12 c 2,0 3,-1 4,-2 l 4,-4 c 1,-1 2,-2 4,-2 H 185.04 a 4,4 0 0,1 4,4 v 40 a 4,4 0 0,1 -4,4 H 48 c -2,0 -3,1 -4,2 l -4,4 c -1,1 -2,2 -4,2 h -12 c -2,0 -3,-1 -4,-2 l -4,-4 c -1,-1 -2,-2 -4,-2 H 4 a 4,4 0 0,1 -4,-4 z" fill="#f59f0a" stroke="#dc8a06" stroke-width="1"/>
<text x="398.8" y="676.99" textLength="114.8" lengthAdjust="spacingAndGlyphs" font-size="10.8" font-weight="bold" fill="#fff">네오픽셀 LED 모두 끄기</text>
<path transform="translate(392.5,688.5) scale(0.675)" d="m 0,4 A 4,4 0 0,1 4,0 H 12 c 2,0 3,1 4,2 l 4,4 c 1,1 2,2 4,2 h 12 c 2,0 3,-1 4,-2 l 4,-4 c 1,-1 2,-2 4,-2 H 184.44 a 4,4 0 0,1 4,4 v 40 a 4,4 0 0,1 -4,4 H 48 c -2,0 -3,1 -4,2 l -4,4 c -1,1 -2,2 -4,2 h -12 c -2,0 -3,-1 -4,-2 l -4,-4 c -1,-1 -2,-2 -4,-2 H 4 a 4,4 0 0,1 -4,-4 z" fill="#ffab19" stroke="#cf8b17" stroke-width="1"/>
<rect x="425.1" y="694.1" width="26.7" height="21.2" rx="10.6" fill="#fff" stroke="#cf8b17" stroke-width="0.7"/>
<text x="438.45" y="709.27" text-anchor="middle" font-size="11.3" font-weight="normal" fill="#575e75">1</text>
<text x="457.8" y="709.39" textLength="55.5" lengthAdjust="spacingAndGlyphs" font-size="10.8" font-weight="bold" fill="#fff">초 기다리기</text>
<path transform="translate(392.5,623.7) scale(0.675)" d="m 0,4 A 4,4 0 0,1 4,0 H 12 c 2,0 3,1 4,2 l 4,4 c 1,1 2,2 4,2 h 12 c 2,0 3,-1 4,-2 l 4,-4 c 1,-1 2,-2 4,-2 H 469.78 a 4,4 0 0,1 4,4 v 40 a 4,4 0 0,1 -4,4 H 48 c -2,0 -3,1 -4,2 l -4,4 c -1,1 -2,2 -4,2 h -12 c -2,0 -3,-1 -4,-2 l -4,-4 c -1,-1 -2,-2 -4,-2 H 4 a 4,4 0 0,1 -4,-4 z" fill="#4263eb" stroke="#3652c8" stroke-width="1"/>
<text x="398.3" y="644.59" textLength="53.3" lengthAdjust="spacingAndGlyphs" font-size="10.8" font-weight="bold" fill="#fff">피에조부저</text>
<rect x="457.8" y="626.4" width="95.6" height="27" rx="13.5" fill="#4263eb" stroke="#3652c8" stroke-width="0.7"/>
<rect x="465.3" y="629.1" width="80.4" height="21.6" rx="2.7" fill="#4263eb" stroke="#3652c8" stroke-width="0.7"/>
<text x="473" y="644.59" textLength="51.4" lengthAdjust="spacingAndGlyphs" font-size="10.8" font-weight="bold" fill="#fff">0.곰세마리</text>
<path d="M530.5 638.31 h6.2 q.7 0 .25 .55 l-2.85 3.58 q-.5 .5 -1 0 l-2.85 -3.58 q-.45 -.55 .25 -.55z" fill="#fff"/>
<text x="559.5" y="644.59" textLength="42.3" lengthAdjust="spacingAndGlyphs" font-size="10.8" font-weight="bold" fill="#fff">(번째) 곡</text>
<rect x="607.9" y="629.3" width="26.5" height="21.2" rx="10.6" fill="#fff" stroke="#3652c8" stroke-width="0.7"/>
<text x="621.15" y="644.47" text-anchor="middle" font-size="11.3" font-weight="normal" fill="#575e75">10</text>
<text x="640.5" y="644.59" textLength="66.3" lengthAdjust="spacingAndGlyphs" font-size="10.8" font-weight="bold" fill="#fff">초(1~20) 연주</text>
</svg>
<!-- ===== right pane ===== -->
<div class="abs" id="upbtn"></div>
<svg style="left:806px;top:105px" width="17" height="16" viewBox="0 0 17 16" fill="#fff">
 <path d="M8.500 0.500l4.800 5h-3v4.500h-3.600v-4.500h-3z"/>
 <path d="M1 10.500h4v1.500h7v-1.500h4c.5 0 .8.300.8.800v3.200c0 .5-.3.800-.8.800h-15c-.5 0-.8-.3-.8-.800v-3.200c0-.5.300-.800.800-.800z"/>
 <circle cx="13.800" cy="13.400" r=".7" fill="#3fb94a"/><circle cx="11.600" cy="13.400" r=".7" fill="#3fb94a"/>
</svg>
<div class="mtxt" style="left:828px;top:104px">업로드</div>
<div class="lbtn" style="left:1176px;width:34px;border-radius:4px 0 0 4px"></div>
<div class="lbtn" style="left:1209px;width:35px;border-radius:0 4px 4px 0"></div>
<div class="lbtn" style="left:1247px;width:34px;border-radius:4px"></div>
<svg style="left:1185px;top:106px" width="88" height="14" viewBox="1185 106 88 14" fill="none">
 <rect x="1186" y="107" width="14" height="12" rx="1.500" stroke="#a4a4a4" stroke-width="1.600"/><path d="M1195.500 107v12" stroke="#a4a4a4" stroke-width="1.600"/><rect x="1195.500" y="107" width="4.500" height="4" fill="#6e6e6e"/>
 <rect x="1219" y="107" width="14" height="12" rx="1.500" stroke="#a6cbff" stroke-width="1.600"/><path d="M1225.500 107v12M1225.500 112.500h7.500" stroke="#a6cbff" stroke-width="1.600"/><rect x="1225.500" y="107" width="7.500" height="5.500" fill="#4c97ff"/>
 <rect x="1257.200" y="107" width="14" height="12" rx="1.500" stroke="#bdbdbd" stroke-width="1.700"/>
</svg>
<div class="abs" id="editor"><div id="edin">
<div class="sel" style="top:137px;width:161.7px;border-radius:0 3px 0px 0"></div>
<div class="sel" style="top:156px;width:238.7px;border-radius:0 3px 3px 0"></div>
<div class="sel" style="top:175px;width:192.5px;border-radius:0 0px 3px 0"></div>
<div class="sel" style="top:194px;width:7.7px;border-radius:0 0px 0px 0"></div>
<div class="sel" style="top:213px;width:585.2px;border-radius:0 3px 3px 0"></div>
<div class="sel" style="top:232px;width:7.7px;border-radius:0 0px 0px 0"></div>
<div class="sel" style="top:251px;width:115.5px;border-radius:0 3px 0px 0"></div>
<div class="sel" style="top:270px;width:138.6px;border-radius:0 3px 0px 0"></div>
<div class="sel" style="top:289px;width:215.6px;border-radius:0 3px 0px 0"></div>
<div class="sel" style="top:308px;width:215.6px;border-radius:0 0px 0px 0"></div>
<div class="sel" style="top:327px;width:215.6px;border-radius:0 0px 3px 0"></div>
<div class="sel" style="top:346px;width:15.4px;border-radius:0 0px 3px 0"></div>
<div class="sel" style="top:365px;width:7.7px;border-radius:0 0px 0px 0"></div>
<div class="sel" style="top:384px;width:107.8px;border-radius:0 3px 0px 0"></div>
<div class="sel" style="top:403px;width:284.9px;border-radius:0 3px 0px 0"></div>
<div class="sel" style="top:422px;width:284.9px;border-radius:0 0px 0px 0"></div>
<div class="sel" style="top:441px;width:284.9px;border-radius:0 0px 0px 0"></div>
<div class="sel" style="top:460px;width:284.9px;border-radius:0 0px 0px 0"></div>
<div class="sel" style="top:479px;width:284.9px;border-radius:0 0px 0px 0"></div>
<div class="sel" style="top:498px;width:292.6px;border-radius:0 3px 3px 0"></div>
<div class="sel" style="top:517px;width:130.9px;border-radius:0 0px 3px 0"></div>
<div class="ln" style="top:137px">1</div>
<div class="cl" style="top:137px"><span class="k">#include </span><span class="k">&lt;</span><span class="s">Arduino.h</span><span class="k">&gt;</span></div>
<div class="ln" style="top:156px">2</div>
<div class="cl" style="top:156px"><span class="k">#include </span><span class="k">&lt;</span><span class="s">Adafruit_NeoPixel.h</span><span class="k">&gt;</span></div>
<div class="ln" style="top:175px">3</div>
<div class="cl" style="top:175px"><span class="k">#include </span><span class="k">&lt;</span><span class="s">JikkoAnimal.h</span><span class="k">&gt;</span></div>
<div class="ln" style="top:194px">4</div>
<div class="ln" style="top:213px">5</div>
<div class="cl" style="top:213px">Adafruit_NeoPixel neo_10 = Adafruit_NeoPixel(<span class="n">12</span>, <span class="n">10</span>, NEO_GRB + NEO_KHZ800);</div>
<div class="ln" style="top:232px">6</div>
<div class="ln" style="top:251px">7</div>
<div class="cl" style="top:251px"><span class="k">void</span> setup() {</div>
<div class="ln" style="top:270px">8</div>
<div class="cl" style="top:270px">  neo_10.begin();</div>
<div class="ln" style="top:289px">9</div>
<div class="cl" style="top:289px">  neo_10.setBrightness(<span class="n">20</span>);</div>
<div class="ln" style="top:308px">10</div>
<div class="cl" style="top:308px">  pinMode(<span class="n">2</span>, INPUT_PULLUP);</div>
<div class="ln" style="top:327px">11</div>
<div class="cl" style="top:327px">  pinMode(<span class="n">3</span>, INPUT_PULLUP);</div>
<div class="ln" style="top:346px">12</div>
<div class="cl" style="top:346px">}</div>
<div class="ln" style="top:365px">13</div>
<div class="ln" style="top:384px">14</div>
<div class="cl" style="top:384px"><span class="k">void</span> loop() {</div>
<div class="ln" style="top:403px">15</div>
<div class="cl" style="top:403px">  neo_10.setPixelColor(<span class="n">0</span>, <span class="h">0xff0000</span>);</div>
<div class="ln" style="top:422px">16</div>
<div class="cl" style="top:422px">  neo_10.setPixelColor(<span class="n">2</span>, <span class="h">0xff0000</span>);</div>
<div class="ln" style="top:441px">17</div>
<div class="cl" style="top:441px">  neo_10.setPixelColor(<span class="n">4</span>, <span class="h">0xff0000</span>);</div>
<div class="ln" style="top:460px">18</div>
<div class="cl" style="top:460px">  neo_10.setPixelColor(<span class="n">6</span>, <span class="h">0xff0000</span>);</div>
<div class="ln" style="top:479px">19</div>
<div class="cl" style="top:479px">  neo_10.setPixelColor(<span class="n">8</span>, <span class="h">0xff0000</span>);</div>
<div class="ln" style="top:498px">20</div>
<div class="cl" style="top:498px">  neo_10.setPixelColor(<span class="n">10</span>, <span class="h">0xff0000</span>);</div>
<div class="ln" style="top:517px">21</div>
<div class="cl" style="top:517px">  neo_10.show();</div>
<div class="abs" style="left:1266px;top:136px;width:1px;height:395px;background:#dedede"></div>
<div class="abs" style="left:1267px;top:415px;width:14px;height:2px;background:#424242"></div>
</div></div>
<div class="abs" id="term"></div>
<div class="abs" id="termbot"></div>
<div class="abs" style="left:1280px;top:545px;width:1px;height:292px;background:#dcdcdc"></div>
<div class="abs" id="tools"></div>
<div class="abs" style="left:1248px;top:572px;width:33px;height:1px;background:#dcdcdc"></div>
<svg style="left:1255px;top:546px" width="20" height="54" viewBox="1255 546 20 54" fill="none" stroke="#4c97ff" stroke-width="1.500" stroke-linejoin="round">
 <rect x="1258.200" y="548.300" width="3.800" height="13.600" rx=".8"/><rect x="1266.600" y="548.300" width="3.800" height="13.600" rx=".8"/>
 <path d="M1256 582.500h16.400M1261.200 582.300v-1.800c0-.8.500-1.300 1.300-1.300h3.400c.8 0 1.300.5 1.300 1.300v1.800"/>
 <path d="M1257.800 582.800l.8 12.200c.1 1.300.8 2 2 2h7.200c1.200 0 1.900-.7 2-2l.8-12.200"/>
 <path d="M1261.500 586v8M1264.200 586v8M1266.900 586v8" stroke-width="1.400"/>
</svg>
<div class="abs" id="send">Send</div>
<svg style="left:1247px;top:809px" width="23" height="23" viewBox="0 0 23 23">
 <path d="M15.300 0.900c-3.800-.8-7.300 2.100-7.100 6 0 .8.200 1.500.5 2.200L1.600 16.200c-1.400 1.400-1.400 3.500-.1 4.800 1.300 1.300 3.400 1.300 4.800-.1l7.100-7.100c4.200 1.300 8.400-1.900 8.100-6.400 0-.6-.2-1.200-.4-1.800l-4.200 4.200-3.200-.7-.7-3.200z" fill="#4c97ff"/>
</svg>
<!-- ===== photo (cat keyring with red LEDs) ===== -->
<svg style="left:785px;top:526px;overflow:hidden" width="429" height="308" viewBox="0 0 429 308">
<defs>
 <linearGradient id="pbg" x1="0" y1="0" x2="0" y2="1">
  <stop offset="0" stop-color="#a67c40"/><stop offset=".2" stop-color="#b27c3c"/><stop offset=".6" stop-color="#ba7e3c"/><stop offset="1" stop-color="#ba8646"/>
 </linearGradient>
 <linearGradient id="pbgx" x1="0" y1="0" x2="1" y2="0">
  <stop offset="0" stop-color="#6a5028" stop-opacity=".3"/><stop offset=".04" stop-color="#6a5028" stop-opacity=".1"/><stop offset=".3" stop-color="#6e4f25" stop-opacity="0"/><stop offset=".82" stop-color="#e0a040" stop-opacity="0"/><stop offset=".95" stop-color="#e0a040" stop-opacity=".4"/>
 </linearGradient>
 <radialGradient id="pbgr" cx="340" cy="300" r="110" gradientUnits="userSpaceOnUse">
  <stop offset="0" stop-color="#7a4218" stop-opacity=".4"/><stop offset=".6" stop-color="#7a4218" stop-opacity=".22"/><stop offset="1" stop-color="#7a4218" stop-opacity="0"/>
 </radialGradient>
 <radialGradient id="pglow" cx="190" cy="160" r="235" gradientUnits="userSpaceOnUse" gradientTransform="translate(0 160) scale(1 .72) translate(0 -160)">
  <stop offset="0" stop-color="#d85028" stop-opacity=".55"/><stop offset=".74" stop-color="#d85028" stop-opacity=".38"/><stop offset=".9" stop-color="#d85028" stop-opacity=".1"/><stop offset="1" stop-color="#d85028" stop-opacity="0"/>
 </radialGradient>
 <linearGradient id="pface" x1="0" y1="65" x2="0" y2="285" gradientUnits="userSpaceOnUse">
  <stop offset="0" stop-color="#f2a0b6"/><stop offset=".09" stop-color="#fa92a8"/><stop offset=".2" stop-color="#ff8298"/><stop offset=".4" stop-color="#ff7e94"/><stop offset=".62" stop-color="#ff748c"/><stop offset=".82" stop-color="#ff6c86"/><stop offset=".92" stop-color="#f4809c"/><stop offset="1" stop-color="#d890ac"/>
 </linearGradient>
 <radialGradient id="pfedge" cx="200" cy="175" r="175" gradientUnits="userSpaceOnUse" gradientTransform="translate(0 175) scale(1 .72) translate(0 -175)">
  <stop offset="0" stop-color="#fba4b8" stop-opacity="0"/><stop offset=".5" stop-color="#fba4b8" stop-opacity="0"/><stop offset="1" stop-color="#f8a0b6" stop-opacity=".75"/>
 </radialGradient>
 <radialGradient id="porange" cx="95" cy="150" r="110" gradientUnits="userSpaceOnUse">
  <stop offset="0" stop-color="#ff5238"/><stop offset=".6" stop-color="#ff593e"/><stop offset="1" stop-color="#f96a54"/>
 </radialGradient>
 <linearGradient id="pdark" x1="300" y1="40" x2="290" y2="160" gradientUnits="userSpaceOnUse">
  <stop offset="0" stop-color="#6b4a58"/><stop offset=".55" stop-color="#774458"/><stop offset="1" stop-color="#b0334f"/>
 </linearGradient>
 <radialGradient id="peye" cx=".5" cy=".5" r=".5">
  <stop offset="0" stop-color="#d81c34"/><stop offset=".6" stop-color="#bc142a"/><stop offset="1" stop-color="#860a1a"/>
 </radialGradient>
 <radialGradient id="pled" cx=".5" cy=".5" r=".5">
  <stop offset="0" stop-color="#ff8080"/><stop offset=".55" stop-color="#ff5a66" stop-opacity=".9"/><stop offset="1" stop-color="#ff2a3c" stop-opacity="0"/>
 </radialGradient>
 <linearGradient id="pblue" x1="0" y1="0" x2="0" y2="1"><stop offset="0" stop-color="#2b3a86"/><stop offset=".5" stop-color="#28357c"/><stop offset="1" stop-color="#283478"/></linearGradient>
 <linearGradient id="pwood" x1="0" y1="0" x2="0" y2="1"><stop offset="0" stop-color="#5a4e40"/><stop offset=".25" stop-color="#3c352d"/><stop offset="1" stop-color="#342e28"/></linearGradient>
 <filter id="f1" x="-20%" y="-20%" width="140%" height="140%"><feGaussianBlur stdDeviation="0.700"/></filter>
 <filter id="f3" x="-30%" y="-30%" width="160%" height="160%"><feGaussianBlur stdDeviation="3"/></filter>
 <filter id="f8" x="-40%" y="-40%" width="180%" height="180%"><feGaussianBlur stdDeviation="8"/></filter>
 <filter id="f14" x="-50%" y="-50%" width="200%" height="200%"><feGaussianBlur stdDeviation="14"/></filter>
 <clipPath id="peyes"><ellipse cx="120.500" cy="164.500" rx="35.500" ry="27.400"/><ellipse cx="253" cy="169" rx="35" ry="27"/></clipPath>
 <radialGradient id="pledc" cx=".5" cy=".5" r=".5"><stop offset="0" stop-color="#ffffff"/><stop offset=".65" stop-color="#fffaf0"/><stop offset="1" stop-color="#ffe2c4"/></radialGradient>
 <clipPath id="phead"><path id="pheadp" d="M77 31 C92 33 118 52 135 66 C160 64 215 64 250 68 C262 60 288 42 306 37 C320 40 332 52 339 65 C350 85 358 105 361 122 C366 140 367 165 364 188 C362 205 355 222 339 238 C325 250 312 256 306 259 C292 266 275 271 259 274 C245 277 232 279 222 281 C215 286 195 287 184 282 C175 287 150 285 137 270 C122 271 105 269 90 265.500 C78 262 68 259 59 255 C48 249 39 242 32 235 C25 228 21 221 18 213 C14 204 12 196 11 186 C9.500 178 9 170 9 162 C8 150 9 138 11 126 C13 112 18 98 25 86 C31 74 39 62 47 54 C56 44 66 36 77 31 Z"/></clipPath>
 <pattern id="ppaw" width="56" height="44" patternUnits="userSpaceOnUse" patternTransform="translate(4 2)">
  <g fill="#f0d890" opacity=".11"><circle cx="8" cy="10" r="2"/><circle cx="5.500" cy="7" r=".9"/><circle cx="8" cy="6" r=".9"/><circle cx="10.500" cy="7" r=".9"/>
  <circle cx="36" cy="32" r="2"/><circle cx="33.500" cy="29" r=".9"/><circle cx="36" cy="28" r=".9"/><circle cx="38.500" cy="29" r=".9"/></g>
 </pattern>
</defs>
<!-- background paper -->
<rect width="429" height="308" fill="url(#pbg)"/>
<rect width="429" height="308" fill="url(#pbgx)"/>
<rect width="429" height="308" fill="url(#pbgr)"/>
<rect width="429" height="308" fill="url(#pglow)"/>
<rect width="429" height="308" fill="url(#ppaw)"/>
<!-- blue strip on the right -->
<path d="M405 0 L429 0 L429 308 L410.500 308 Z" fill="url(#pblue)"/>
<!-- key ring hole + chains -->
<circle cx="405.500" cy="142" r="26" fill="#3f2c27" filter="url(#f1)"/>
<path d="M384 133 q20 -8 44 0M386 150 q20 -6 42 1" stroke="#57443a" stroke-width="3" fill="none" opacity=".45" filter="url(#f1)"/>
<g fill="none" stroke="#f6e3e7" stroke-width="5.200" stroke-linecap="round" stroke-dasharray="1.400 9.100">
 <path d="M341 65 C360 62 385 57 402 56.500 C412 57 422 61 429 65"/>
 <path d="M372 93 C390 89 410 86 429 82"/>
</g>
<g fill="#f1dade"><ellipse cx="424" cy="68" rx="3.200" ry="2.500"/><ellipse cx="427" cy="76" rx="2.600" ry="3.400"/><ellipse cx="426" cy="85" rx="2.600" ry="3"/></g>
<g fill="none" stroke="#b89aa0" stroke-width="1" opacity=".7"><path d="M341 65 C360 62 385 57 402 56.500 C412 57 422 61 429 65"/><path d="M372 93 C390 89 410 86 429 82"/></g>
<path d="M351 93 q9 -5 20 -2 q-8 6 -19 5z" fill="#d8c8cc" stroke="#7a6068" stroke-width=".8"/><path d="M356 93.500 q6 -2.500 11 -1" stroke="#6a4a58" stroke-width="1.600" fill="none"/>
<!-- tail -->
<g filter="url(#f1)">
 <path d="M374 156 C388 148 404 152 410 166 C417 186 412 214 394 230 C380 242 360 246 343 243 L352 222 C366 221 378 214 384 202 C390 190 388 176 380 170 Z" fill="#e48a52"/>
 <path d="M374 156 C386 149 400 151 407 160 L383 171 C381 168 378 165 374 164 Z" fill="#6c3e5a"/>
 <path d="M385 184 L413 188 C413 198 410 208 405 216 L381 205 C384 199 386 192 385 184 Z" fill="#643a5c"/>
 <path d="M343 243 L352 214 C360 214 368 210 373 205 L386 232 C374 241 358 245 343 243 Z" fill="#7a3a52"/>
</g>
<!-- cat head -->
<g filter="url(#f1)">
<use href="#pheadp" fill="url(#pface)"/>
<g clip-path="url(#phead)">
 <!-- lighter rim tones -->
 <use href="#pheadp" fill="url(#pfedge)"/>
 <ellipse cx="258" cy="266" rx="46" ry="15" fill="#a88cb2" filter="url(#f8)" opacity=".85"/>
 <!-- orange patch on the left with ear -->
 <path d="M169 60 C169 80 166 100 158 119 C154 128 150 134 146 140 C120 128 88 140 78 168 C76 176 78 184 84 190 C66 200 40 208 12 214 L-5 214 L-5 20 L169 20 Z" fill="url(#porange)"/>
 <path d="M10 214 C40 208 66 200 86 191 L92 197 C70 208 44 216 14 222 Z" fill="#ec5f66" opacity=".85" filter="url(#f1)"/>
 <path d="M30 60 C18 90 8 130 12 175 C14 195 22 210 30 218 L0 230 L0 40 Z" fill="#f58a8a" opacity=".55" filter="url(#f3)"/>
 <path d="M77 28 C100 35 125 55 140 70 L60 110 L20 100 C35 60 55 38 77 28Z" fill="#f08c86" opacity=".45" filter="url(#f8)"/>
 <path d="M84 47 Q88 45 92 49 L114 65 Q117 68 113 70 L60 94 Q55 96 56 91 Z" fill="#e68498"/>
 <!-- dark patch on the right with ear -->
 <path d="M237 60 C240 78 246 95 258 110 C272 128 292 142 316 152 C334 158 352 161 372 163 L372 20 L237 20 Z" fill="url(#pdark)"/>
 <path d="M258 110 C272 128 292 142 316 152 C334 158 352 161 372 163 L372 150 C340 146 300 135 270 105 Z" fill="#c02c4e" opacity=".5" filter="url(#f3)"/>
 <path d="M305 53 Q309 51 311 56 L335 99 Q337 104 331 103 L275 78 Q270 76 274 73 Z" fill="#e0929e"/>
 <!-- glow rings around the eyes -->
 <ellipse cx="120.500" cy="164.500" rx="44.500" ry="36" fill="#ff9eac" filter="url(#f3)" opacity=".95"/>
 <ellipse cx="253" cy="169" rx="41" ry="32" fill="#ff90a4" filter="url(#f3)" opacity=".45"/>
</g>
</g>
<!-- eyes -->
<g filter="url(#f1)">
 <ellipse cx="120.500" cy="164.500" rx="35.500" ry="27.400" fill="url(#peye)"/>
 <ellipse cx="253" cy="169" rx="35" ry="27" fill="url(#peye)"/>
 <g clip-path="url(#peyes)">
  <rect x="98.8" y="145.2" width="16" height="14" rx="2" fill="#a31226" stroke="#d23a4e" stroke-width=".7"/><ellipse cx="106.8" cy="152.2" rx="6" ry="4.600" fill="#c4485a"/>
  <rect x="118.9" y="163.8" width="16" height="14" rx="2" fill="#a31226" stroke="#d23a4e" stroke-width=".7"/><ellipse cx="126.9" cy="170.8" rx="6" ry="4.600" fill="#c4485a"/>
  <rect x="140.0" y="146.5" width="16" height="14" rx="2" fill="#a31226" stroke="#d23a4e" stroke-width=".7"/><ellipse cx="148.0" cy="153.5" rx="6" ry="4.600" fill="#c4485a"/>
  <rect x="219.0" y="149.2" width="16" height="14" rx="2" fill="#a31226" stroke="#d23a4e" stroke-width=".7"/><ellipse cx="227.0" cy="156.2" rx="6" ry="4.600" fill="#c4485a"/>
  <rect x="237.2" y="168.8" width="16" height="14" rx="2" fill="#a31226" stroke="#d23a4e" stroke-width=".7"/><ellipse cx="245.2" cy="175.8" rx="6" ry="4.600" fill="#c4485a"/>
  <rect x="257.6" y="150.4" width="16" height="14" rx="2" fill="#a31226" stroke="#d23a4e" stroke-width=".7"/><ellipse cx="265.6" cy="157.4" rx="6" ry="4.600" fill="#c4485a"/>
  <rect x="119.4" y="145.8" width="16" height="14" rx="2" fill="none" stroke="#e8384e" stroke-width=".7" opacity=".7"/>
  <rect x="97.6" y="163.6" width="16" height="14" rx="2" fill="none" stroke="#e8384e" stroke-width=".7" opacity=".7"/>
  <rect x="139.2" y="164.9" width="16" height="14" rx="2" fill="none" stroke="#e8384e" stroke-width=".7" opacity=".7"/>
  <rect x="238.3" y="149.3" width="16" height="14" rx="2" fill="none" stroke="#e8384e" stroke-width=".7" opacity=".7"/>
  <rect x="216.8" y="167.6" width="16" height="14" rx="2" fill="none" stroke="#e8384e" stroke-width=".7" opacity=".7"/>
  <rect x="257.6" y="168.7" width="16" height="14" rx="2" fill="none" stroke="#e8384e" stroke-width=".7" opacity=".7"/>
  <g fill="none" stroke="#ffb4bc" stroke-width=".9" opacity=".75"><rect x="101" y="140.5" width="10" height="4"/><rect x="121.5" y="141" width="10" height="4"/><rect x="118.5" y="180" width="11" height="4.5"/><rect x="99" y="179.5" width="9" height="3.5"/><rect x="140" y="180.5" width="9" height="3.5"/><rect x="242" y="144.5" width="10" height="4"/><rect x="264" y="145.5" width="9" height="4"/><rect x="240.5" y="185.5" width="11" height="4.5"/><rect x="262" y="186" width="9" height="3.5"/><rect x="221" y="185" width="8" height="3.5"/></g>
 </g>
</g>
<g>
 <ellipse cx="127.4" cy="152.8" rx="13" ry="11.500" fill="url(#pled)"/>
 <ellipse cx="105.6" cy="170.6" rx="13" ry="11.500" fill="url(#pled)"/>
 <ellipse cx="147.2" cy="171.9" rx="13" ry="11.500" fill="url(#pled)"/>
 <ellipse cx="246.3" cy="156.3" rx="13" ry="11.500" fill="url(#pled)"/>
 <ellipse cx="224.8" cy="174.6" rx="13" ry="11.500" fill="url(#pled)"/>
 <ellipse cx="265.6" cy="175.7" rx="13" ry="11.500" fill="url(#pled)"/>
 <g filter="url(#f1)"><ellipse cx="127.4" cy="152.8" rx="7.200" ry="5.600" fill="url(#pledc)"/><ellipse cx="105.6" cy="170.6" rx="7.200" ry="5.600" fill="url(#pledc)"/><ellipse cx="147.2" cy="171.9" rx="7.200" ry="5.600" fill="url(#pledc)"/><ellipse cx="246.3" cy="156.3" rx="7.200" ry="5.600" fill="url(#pledc)"/><ellipse cx="224.8" cy="174.6" rx="7.200" ry="5.600" fill="url(#pledc)"/><ellipse cx="265.6" cy="175.7" rx="7.200" ry="5.600" fill="url(#pledc)"/></g>
</g>
<!-- face details -->
<g filter="url(#f1)">
 <rect x="123" y="115" width="25" height="7.500" rx="3.700" fill="#d93a52"/>
 <rect x="235.500" y="119.500" width="25" height="7.500" rx="3.700" fill="#cf3a58"/>
 <rect x="174.500" y="195.500" width="25" height="8" rx="4" fill="#e22f52"/>
 <path d="M107 211.500 Q116 210 124.500 212.500 M106.500 221 Q116 216 124.500 217" stroke="#e8344e" stroke-width="2" fill="none" stroke-linecap="round"/>
 <path d="M248 216.500 Q256 214.500 264 215.500 M247 221.500 Q256 222.500 264.500 227" stroke="#a52c50" stroke-width="2.400" fill="none" stroke-linecap="round"/>
 <path d="M45 169 L58 168 L64 177 L58 187 L46 187 L40 178 Z" fill="#e2a8b6"/>
 <path d="M318 178 L328 178.500 L333 186 L328 194 L318 194 L312.500 186 Z" fill="#e8a0b4" opacity=".8"/>
 <!-- paws -->
 <path d="M137 271 C138 262 150 256 162 258 C174 260 182 268 183 279 C176 286 150 286 137 271 Z" fill="#f79a5c"/>
 <path d="M184 280 C185 268 194 258 206 257 C214 257 220 260 222 264 L222 281 C214 287 195 287 184 280 Z" fill="#d6b2cc" opacity=".75"/>
 <path d="M150 258 C160 255 172 258 178 266 C181 270 183 275 183.500 279 C185 270 190 262 198 258" fill="none" stroke="#b8a0b4" stroke-width="1.300"/>
 <g fill="#4c3c60"><rect x="155" y="276.500" width="3.600" height="6.500" rx="1.300"/><rect x="163.500" y="276.500" width="3.600" height="6.500" rx="1.300"/><rect x="197.500" y="277.500" width="3.600" height="6.500" rx="1.300"/><rect x="206" y="277.500" width="3.600" height="6.500" rx="1.300"/></g>
</g>
<!-- desk edge at the bottom -->
<path d="M0 291.500 L429 287.500 L429 308 L0 308 Z" fill="url(#pwood)"/>
<path d="M0 300 L429 297" stroke="#4a4238" stroke-width="1.500" opacity=".6"/>
</svg>
</div></div>
</body>
</html>
